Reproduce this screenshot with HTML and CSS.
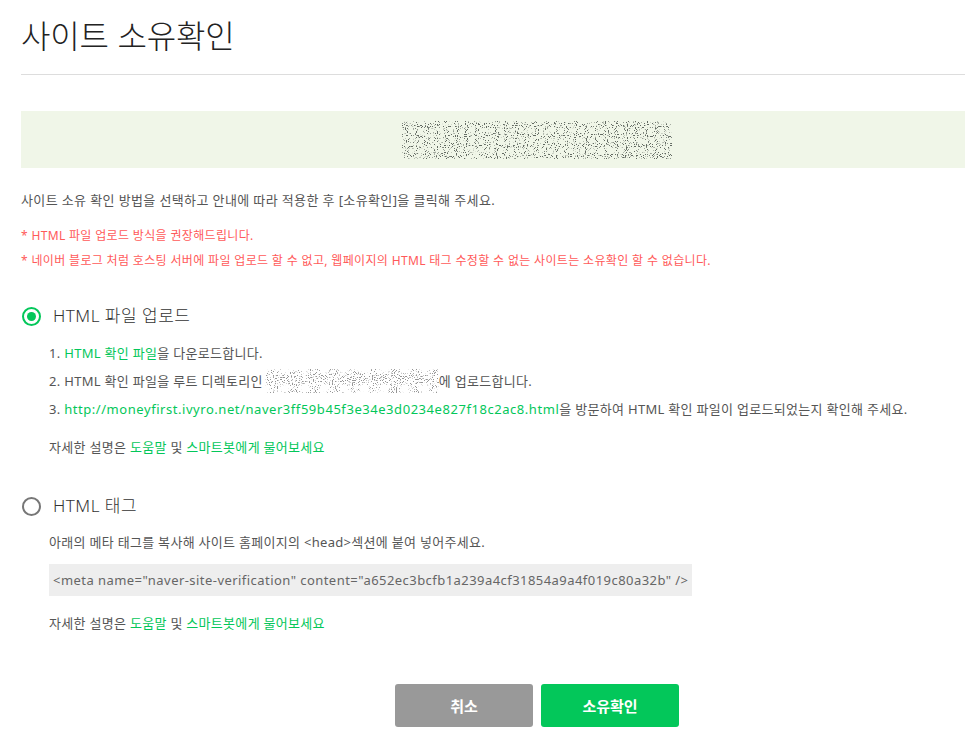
FILE: index.html
```html
<!DOCTYPE html>
<html lang="ko">
<head>
<meta charset="utf-8">
<link rel="stylesheet" href="styles.css">
</head>
<body>
<div class="page">
  <h1 class="title">사이트 소유확인</h1>
  <div class="divider"></div>

  <div class="site-box">
    <svg class="noise" width="270" height="38" viewBox="0 0 270 38">
      <defs>
        <filter id="nz" x="0" y="0" width="100%" height="100%">
          <feTurbulence type="fractalNoise" baseFrequency="0.9" numOctaves="1" seed="4"/>
          <feColorMatrix type="matrix" values="0 0 0 0 0.12  0 0 0 0 0.14  0 0 0 0 0.12  -11 0 0 0 4.6"/>
        </filter>
      </defs>
      <rect x="0" y="0" width="270" height="38" filter="url(#nz)"/>
    </svg>
  </div>

  <p class="intro">사이트 소유 확인 방법을 선택하고 안내에 따라 적용한 후 [소유확인]을 클릭해 주세요.</p>
  <p class="warn">* HTML 파일 업로드 방식을 권장해드립니다.</p>
  <p class="warn">* 네이버 블로그 처럼 호스팅 서버에 파일 업로드 할 수 없고, 웹페이지의 HTML 태그 수정할 수 없는 사이트는 소유확인 할 수 없습니다.</p>

  <section class="method">
    <div class="radio-row">
      <span class="radio checked"></span>
      <span class="radio-label">HTML 파일 업로드</span>
    </div>
    <div class="method-body">
      <ol class="steps">
        <li>1. <a class="link">HTML 확인 파일</a>을 다운로드합니다.</li>
        <li>2. HTML 확인 파일을 루트 디렉토리인<svg class="noise-inline" width="174" height="24" viewBox="0 0 174 24">
          <defs>
            <filter id="nz2" x="0" y="0" width="100%" height="100%">
              <feTurbulence type="fractalNoise" baseFrequency="0.95" numOctaves="1" seed="11"/>
              <feColorMatrix type="matrix" values="0 0 0 0 0.3  0 0 0 0 0.3  0 0 0 0 0.3  -11 0 0 0 4.6"/>
            </filter>
          </defs>
          <rect x="0" y="0" width="174" height="24" filter="url(#nz2)"/>
        </svg>에 업로드합니다.</li>
        <li>3. <a class="link url">http://moneyfirst.ivyro.net/naver3ff59b45f3e34e3d0234e827f18c2ac8.html</a>을 방문하여 HTML 확인 파일이 업로드되었는지 확인해 주세요.</li>
      </ol>
      <p class="help">자세한 설명은 <a class="link">도움말</a> 및 <a class="link">스마트봇에게 물어보세요</a></p>
    </div>
  </section>

  <section class="method">
    <div class="radio-row">
      <span class="radio"></span>
      <span class="radio-label">HTML 태그</span>
    </div>
    <div class="method-body">
      <p class="desc">아래의 메타 태그를 복사해 사이트 홈페이지의 &lt;head&gt;섹션에 붙여 넣어주세요.</p>
      <div class="code">&lt;meta name="naver-site-verification" content="a652ec3bcfb1a239a4cf31854a9a4f019c80a32b" /&gt;</div>
      <p class="help">자세한 설명은 <a class="link">도움말</a> 및 <a class="link">스마트봇에게 물어보세요</a></p>
    </div>
  </section>

  <div class="actions">
    <button class="btn btn-cancel">취소</button>
    <button class="btn btn-ok">소유확인</button>
  </div>
</div>
</body>
</html>
```

FILE: styles.css
```css
* { box-sizing: border-box; }
html, body { margin: 0; padding: 0; background: #fff; overflow: hidden; }
body {
  font-family: "Noto Sans", "Noto Sans CJK KR", sans-serif;
  color: #555;
  width: 965px;
}
.page {
  padding: 11px 0 0 21px;
}
.title {
  margin: 0;
  font-family: "Noto Sans CJK KR", sans-serif;
  font-size: 32px;
  font-weight: 300;
  color: #222;
  line-height: 46px;
  letter-spacing: -0.2px;
}
.divider {
  margin-top: 17px;
  height: 1px;
  background: #ddd;
}
.site-box {
  margin-top: 36px;
  height: 57px;
  background: #f0f6e8;
  display: flex;
  align-items: center;
  padding-left: 381px;
}
.noise { display: block; }
.intro {
  margin: 22px 0 0;
  font-size: 13px;
  line-height: 20px;
  color: #555;
  letter-spacing: 0.38px;
}
.warn {
  margin: 16px 0 0;
  font-size: 12px;
  line-height: 19px;
  color: #ff5a5a;
  letter-spacing: 0.34px;
}
.warn + .warn { margin-top: 6px; }
.method { margin-top: 34px; }
.method + .method { margin-top: 37px; }
.radio-row {
  display: flex;
  align-items: center;
  gap: 12px;
  padding-left: 1px;
}
.radio {
  width: 19px;
  height: 19px;
  border-radius: 50%;
  border: 2px solid #777;
  position: relative;
  flex: none;
}
.radio.checked { border-color: #03c75a; }
.radio.checked::after {
  content: "";
  position: absolute;
  left: 3px; top: 3px;
  width: 9px; height: 9px;
  border-radius: 50%;
  background: #03c75a;
}
.radio-label {
  font-size: 17px;
  font-weight: 300;
  color: #333;
  line-height: 24px;
  letter-spacing: 0.5px;
}
.method-body { padding-left: 28px; }
.steps {
  list-style: none;
  margin: 11px 0 0;
  padding: 0;
}
.steps li {
  font-size: 13px;
  line-height: 28px;
  height: 28px;
  color: #555;
  letter-spacing: 0.3px;
  white-space: nowrap;
}
.steps .url { letter-spacing: 0.55px; }
.noise-inline { vertical-align: middle; margin: -4px 0 0 2px; }
.link { color: #03c75a; text-decoration: none; }
.help {
  margin: 14px 0 0;
  font-size: 13px;
  line-height: 20px;
  color: #555;
  letter-spacing: 0.3px;
}
.desc {
  margin: 14px 0 0;
  font-size: 13px;
  line-height: 20px;
  color: #555;
  letter-spacing: 0.3px;
}
.code {
  margin-top: 12px;
  display: inline-block;
  width: 643px;
  height: 32px;
  line-height: 32px;
  padding-left: 4px;
  background: #eee;
  font-size: 13px;
  color: #666;
  letter-spacing: 0.45px;
  white-space: nowrap;
}
.method-body .code + .help { margin-top: 17px; }
.actions {
  margin-top: 51px;
  display: flex;
  justify-content: center;
  gap: 8px;
  padding-left: 88px;
}
.btn {
  width: 138px;
  height: 43px;
  border: none;
  border-radius: 3px;
  color: #fff;
  font-family: "Noto Sans CJK KR", sans-serif;
  font-size: 15px;
  font-weight: 700;
}
.btn-cancel { background: #999; }
.btn-ok { background: #03c75a; }
```
